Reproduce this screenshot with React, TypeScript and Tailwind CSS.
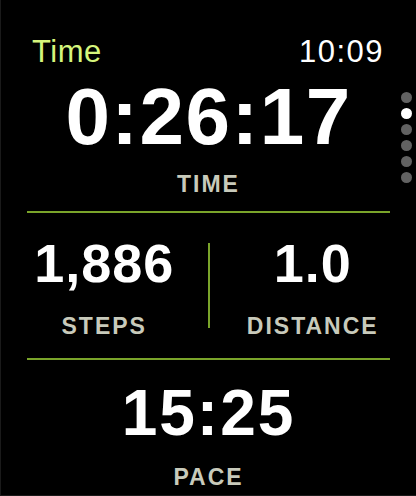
export default function App() {
  const dots = [0, 1, 2, 3, 4, 5];
  return (
    <main
      className="relative flex h-[496px] w-[416px] flex-col overflow-hidden border-b border-l border-[#1a1a1a] bg-black text-white"
      style={{ fontFamily: '"Liberation Sans", Arial, sans-serif' }}
    >
      <header className="flex items-start justify-between pl-[31px] pr-[32px] pt-[36px] text-[31px] leading-[31px]">
        <span className="tracking-[0.5px] text-[#d6f57c]">Time</span>
        <span className="tracking-[1.5px]">10:09</span>
      </header>

      <section className="flex flex-col items-center">
        <div className="mt-[10px] text-[80px] font-bold leading-[80px] tracking-[1.5px]">0:26:17</div>
        <div className="mt-[16px] text-[23px] font-bold leading-[23px] tracking-[2px] text-[#c8cabb]">TIME</div>
      </section>

      <div className="mx-[26px] mt-[15px] h-[2px] bg-[#7aa42a]" />

      <section className="flex">
        <div className="flex flex-1 flex-col items-center">
          <div className="mt-[23px] text-[54px] font-bold leading-[54px] tracking-[1px]">1,886</div>
          <div className="mt-[25px] text-[23px] font-bold leading-[23px] tracking-[2px] text-[#c8cabb]">STEPS</div>
        </div>
        <div className="mt-[30px] h-[85px] w-[2px] bg-[#7aa42a]" />
        <div className="flex flex-1 flex-col items-center">
          <div className="mt-[23px] text-[54px] font-bold leading-[54px] tracking-[1px]">1.0</div>
          <div className="mt-[25px] text-[23px] font-bold leading-[23px] tracking-[2px] text-[#c8cabb]">DISTANCE</div>
        </div>
      </section>

      <div className="mx-[26px] mt-[20px] h-[2px] bg-[#7aa42a]" />

      <section className="flex flex-col items-center">
        <div className="mt-[21px] text-[64px] font-bold leading-[64px] tracking-[2px]">15:25</div>
        <div className="mt-[21px] text-[23px] font-bold leading-[23px] tracking-[2px] text-[#c8cabb]">PACE</div>
      </section>

      <div className="absolute right-[4px] top-[92px] flex flex-col gap-[5px]">
        {dots.map((d) => (
          <span
            key={d}
            className={d === 1 ? 'h-[11px] w-[11px] rounded-full bg-white' : 'h-[11px] w-[11px] rounded-full bg-[#626262]'}
          />
        ))}
      </div>
    </main>
  );
}
